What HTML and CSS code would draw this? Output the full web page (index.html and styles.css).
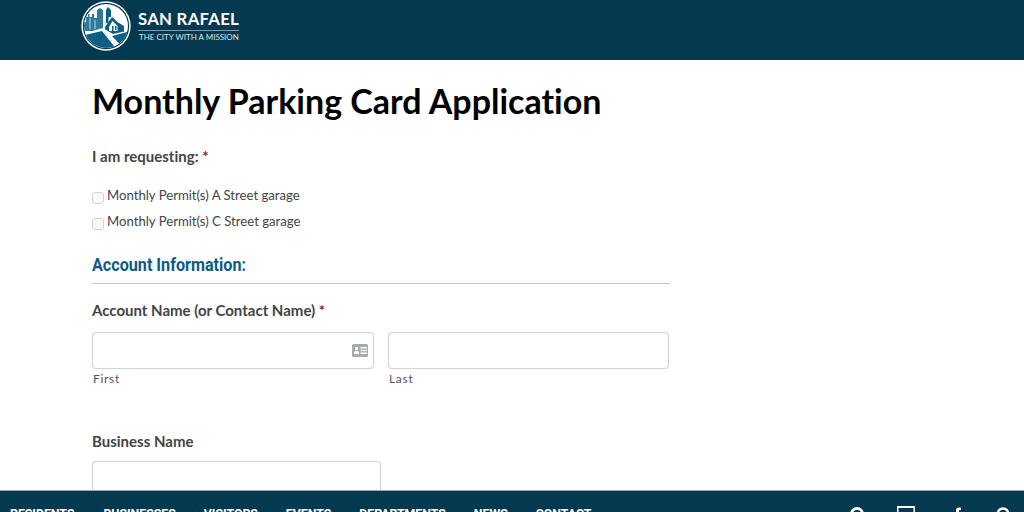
FILE: index.html
```html
<!DOCTYPE html>
<html lang="en">
<head>
<meta charset="utf-8">
<title>Monthly Parking Card Application</title>
<link rel="stylesheet" href="styles.css">
</head>
<body>
<header class="site-header">
  <a class="brand">
    <svg class="seal" viewBox="0 0 50 50" width="50" height="50" aria-hidden="true">
      <defs><clipPath id="disc"><circle cx="25" cy="25" r="22"/></clipPath></defs>
      <circle cx="25" cy="25" r="24.7" fill="#fff"/>
      <circle cx="25" cy="25" r="23.200" fill="#05394f"/>
      <circle cx="25" cy="25" r="22" fill="#fff"/>
      <g clip-path="url(#disc)">
        <path d="M3 30V21h2v-5h2v-3h1.500v3H11v-3h2v4h3V9l3-2 3 2v19l-8 2z" fill="#2f7a9c"/>
        <path d="M9 17v11M14 19v9" stroke="#fff" stroke-width="0.700" fill="none"/>
        <path d="M25 22V9l2-3 3 3v7h-2.500v6z" fill="#0b5f85"/>
        <path d="M24 26l7-10 10 9v6l-9 2-8-4z" fill="#0b5f85"/>
        <path d="M28 26l3.500-6 5 5v5h-8.500z" fill="#fff"/>
        <path d="M31 25h1.500v5H31zM34 25h1.500v4H34z" fill="#0b5f85"/>
        <path d="M38 22l5 3v6l-5-1z" fill="#0b5f85"/>
        <path d="M0 33L22 27L46 42V50H0z" fill="#fff"/>
        <path d="M0 35L21 30L37 50H0z" fill="#0b5f85"/>
        <path d="M31 35L50 30V50H45z" fill="#0b5f85"/>
      </g>
    </svg>
    <span class="brand-text">
      <span class="brand-name">SAN RAFAEL</span>
      <span class="brand-tag">THE CITY WITH A MISSION</span>
    </span>
  </a>
</header>

<main class="content">
  <h1 class="page-title">Monthly Parking Card Application</h1>

  <form class="form">
    <fieldset class="group">
      <div class="label">I am requesting: <span class="req">*</span></div>
      <label class="choice"><span class="box"></span>Monthly Permit(s) A Street garage</label>
      <label class="choice"><span class="box"></span>Monthly Permit(s) C Street garage</label>
    </fieldset>

    <h2 class="section"><span class="section-text">Account Information:</span></h2>

    <div class="label">Account Name (or Contact Name) <span class="req">*</span></div>
    <div class="name-row">
      <div class="name-col">
        <div class="input input-first">
          <svg class="card-icon" viewBox="0 0 16 13" width="16" height="13" aria-hidden="true">
            <path fill-rule="evenodd" d="M1.500 0h13A1.500 1.500 0 0 1 16 1.500v10a1.500 1.500 0 0 1-1.500 1.500h-13A1.500 1.500 0 0 1 0 11.500v-10A1.500 1.500 0 0 1 1.500 0zM4.500 3a1.700 1.700 0 1 0 0 3.400 1.700 1.700 0 0 0 0-3.400zM2 10h5V8.500C7 7.600 6 7 4.500 7S2 7.600 2 8.500zM8.500 3v1.500H15V3zM8.500 5.800v1.500H15V5.800zM8.500 8.600v1.500H15V8.600z" fill="#a6abae"/>
          </svg>
        </div>
        <div class="hint">First</div>
      </div>
      <div class="name-col name-col-last">
        <div class="input"></div>
        <div class="hint">Last</div>
      </div>
    </div>

    <div class="label label-business">Business Name</div>
    <div class="input input-business"></div>
  </form>
</main>

<nav class="bottom-bar">
  <ul class="nav-links">
    <li>RESIDENTS</li>
    <li>BUSINESSES</li>
    <li>VISITORS</li>
    <li>EVENTS</li>
    <li>DEPARTMENTS</li>
    <li>NEWS</li>
    <li>CONTACT</li>
  </ul>
  <div class="nav-icons">
    <svg class="icon-search" viewBox="0 0 16 16" width="16" height="16" aria-hidden="true"><circle cx="8" cy="8" r="5.500" fill="none" stroke="#fff" stroke-width="3"/></svg>
    <svg class="icon-card" viewBox="0 0 18 16" width="18" height="16" aria-hidden="true"><path d="M.8.800h16.400v14H.8z" fill="none" stroke="#fff" stroke-width="1.500"/><path d="M1 1h16v1H1z" fill="#fff"/></svg>
    <svg class="icon-fb" viewBox="0 0 10 16" width="10" height="16" aria-hidden="true"><path d="M3 16V8H1V5.500h2V3.500C3 1.500 4.200.5 6 .5h2V3H7C6.200 3 6 3.400 6 4v1.500h2L7.700 8H6v8z" fill="#fff"/></svg>
    <svg class="icon-pin" viewBox="0 0 16 16" width="16" height="16" aria-hidden="true"><circle cx="7" cy="7" r="5.500" fill="none" stroke="#fff" stroke-width="2.400"/></svg>
  </div>
</nav>
</body>
</html>
```

FILE: styles.css
```css
* { box-sizing: border-box; }

html, body {
  margin: 0;
  height: 512px;
  overflow: hidden;
  background: #fff;
  font-family: "Lato", "Liberation Sans", sans-serif;
  font-variant-ligatures: none;
  color: #444;
}

.site-header {
  height: 60px;
  background: #05394f;
  padding-left: 81px;
  display: flex;
  align-items: flex-start;
}

.brand {
  display: flex;
  align-items: flex-start;
  color: #fff;
}

.seal {
  display: block;
  margin-top: 1px;
}

.brand-text {
  display: flex;
  flex-direction: column;
  margin-left: 7px;
  margin-top: 10px;
}

.brand-name {
  font-size: 16.800px;
  line-height: 18px;
  font-weight: 700;
  letter-spacing: 0.250px;
  padding-bottom: 2px;
  border-bottom: 1px solid #7e9aa8;
  white-space: nowrap;
}

.brand-tag {
  font-size: 8px;
  line-height: 12px;
  margin-top: 0;
  margin-left: 1px;
  color: #dbe5ea;
  white-space: nowrap;
}

.content {
  padding: 17px 0 0 92px;
  width: 670px;
}

.page-title {
  margin: 0;
  font-size: 34px;
  line-height: 48px;
  font-weight: 700;
  color: #000;
  white-space: nowrap;
}

.form {
  margin-top: 20px;
}

.group {
  border: 0;
  margin: 0;
  padding: 0;
}

.label {
  font-size: 15px;
  line-height: 22px;
  font-weight: 700;
  color: #444;
}

.req {
  color: #8f1f1f;
}

.choice {
  display: flex;
  align-items: center;
  font-size: 13.150px;
  line-height: 26px;
  color: #444;
  white-space: nowrap;
}

.group .label + .choice {
  margin-top: 15px;
}

.box {
  width: 12px;
  height: 12px;
  margin-top: 5px;
  margin-right: 3px;
  border: 1px solid #d2d2d2;
  border-radius: 3px;
  background: #fafafa;
}

.section {
  margin: 19px 0 0;
  padding-bottom: 6px;
  border-bottom: 1px solid #c4c4c4;
  font-family: "Roboto", "Liberation Sans", sans-serif;
  font-size: 19px;
  line-height: 24px;
  font-weight: 700;
  color: #0d5a82;
}

.section-text {
  display: inline-block;
  transform: scaleX(0.85);
  transform-origin: left center;
  white-space: nowrap;
}

.section + .label {
  margin-top: 15px;
}

.name-row {
  display: flex;
  gap: 14px;
  margin-top: 11px;
}

.name-col {
  width: 282px;
}

.name-col-last {
  width: 281px;
}

.input {
  height: 37px;
  border: 1px solid #d4d4d4;
  border-radius: 4px;
  background: #fff;
  box-shadow: 0 0 1px #ddd;
}

.input-first {
  display: flex;
  align-items: center;
  justify-content: flex-end;
  padding-right: 5px;
}

.card-icon {
  display: block;
}

.hint {
  margin-top: 1px;
  padding-left: 1px;
  font-size: 12px;
  line-height: 18px;
  letter-spacing: 0.700px;
  color: #555;
}

.label-business {
  margin-top: 42px;
}

.input-business {
  width: 289px;
  margin-top: 9px;
}

.bottom-bar {
  position: fixed;
  left: 0;
  right: 0;
  top: 490px;
  height: 60px;
  background: #05394f;
  border-top: 1px solid #9aa6ac;
  display: flex;
  justify-content: space-between;
  color: #fff;
}

.nav-links {
  list-style: none;
  margin: 0;
  padding: 15px 0 0 10px;
  display: flex;
  gap: 28px;
  font-family: "Roboto", "Liberation Sans", sans-serif;
  font-size: 12.300px;
  line-height: 16px;
  font-weight: 700;
}

.nav-links li:first-child {
  margin-right: 1px;
}

.nav-icons {
  display: flex;
  align-items: flex-start;
  padding: 15px 0 0 0;
  width: 175px;
}

.icon-card { margin-left: 32px; }
.icon-fb { margin-left: 38px; margin-top: 1px; }
.icon-pin { margin-left: 33px; margin-top: 1px; }
```
